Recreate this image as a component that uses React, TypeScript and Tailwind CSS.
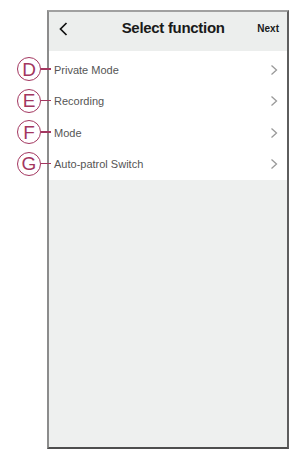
import React from "react";

const items = ["D", "E", "F", "G"];
const labels = ["Private Mode", "Recording", "Mode", "Auto-patrol Switch"];

function Chevron() {
  return (
    <svg width="8" height="12" viewBox="0 0 8 12" fill="none">
      <path d="M1.5 1.5 L6.5 6 L1.5 10.5" stroke="#9a9a9a" strokeWidth="1.3" />
    </svg>
  );
}

export default function App() {
  return (
    <div
      className="relative w-[298px] h-[468px] bg-white overflow-hidden"
      style={{ fontFamily: '"Liberation Sans", Arial, sans-serif' }}
    >
      <div className="ml-[47px] mt-[10px] w-[242px] h-[439px] bg-[#eef0ef] border-2 border-t-[#a0a0a0] border-l-[#8c8c8c] border-r-[#5e5e5e] border-b-[#4e4e4e] flex flex-col">
        <div className="h-[39px] flex items-center px-[5px] pb-[6px] bg-[#eceeed]">
          <svg width="14" height="16" viewBox="0 0 14 16" fill="none" className="ml-[3px]">
            <path d="M9.5 2 L3.5 8 L9.5 14" stroke="#111" strokeWidth="1.7" />
          </svg>
          <div className="flex-1 text-center text-[15px] tracking-[-0.3px] font-bold text-[#1a1a1a] pl-[18px]">Select function</div>
          <div className="text-[10px] font-bold text-[#1a1a1a] pr-[3px]">Next</div>
        </div>
        <div className="bg-white pt-[3px] flex flex-col">
          {labels.map((l) => (
            <div key={l} className="h-[31.5px] flex items-center justify-between pl-[5px] pr-[9px]">
              <span className="text-[11px] text-[#555]">{l}</span>
              <Chevron />
            </div>
          ))}
        </div>
      </div>
      {items.map((c, i) => (
        <div
          key={c}
          className="absolute left-[17px] flex items-center"
          style={{ top: 57 + i * 31.5 }}
        >
          <div className="w-[24px] h-[24px] rounded-full border-[1.5px] border-[#a3365f] flex items-center justify-center text-[19px] leading-none text-[#a3365f]">
            {c}
          </div>
          <div className="w-[10px] h-[1.5px] bg-[#a3365f]" />
        </div>
      ))}
    </div>
  );
}
